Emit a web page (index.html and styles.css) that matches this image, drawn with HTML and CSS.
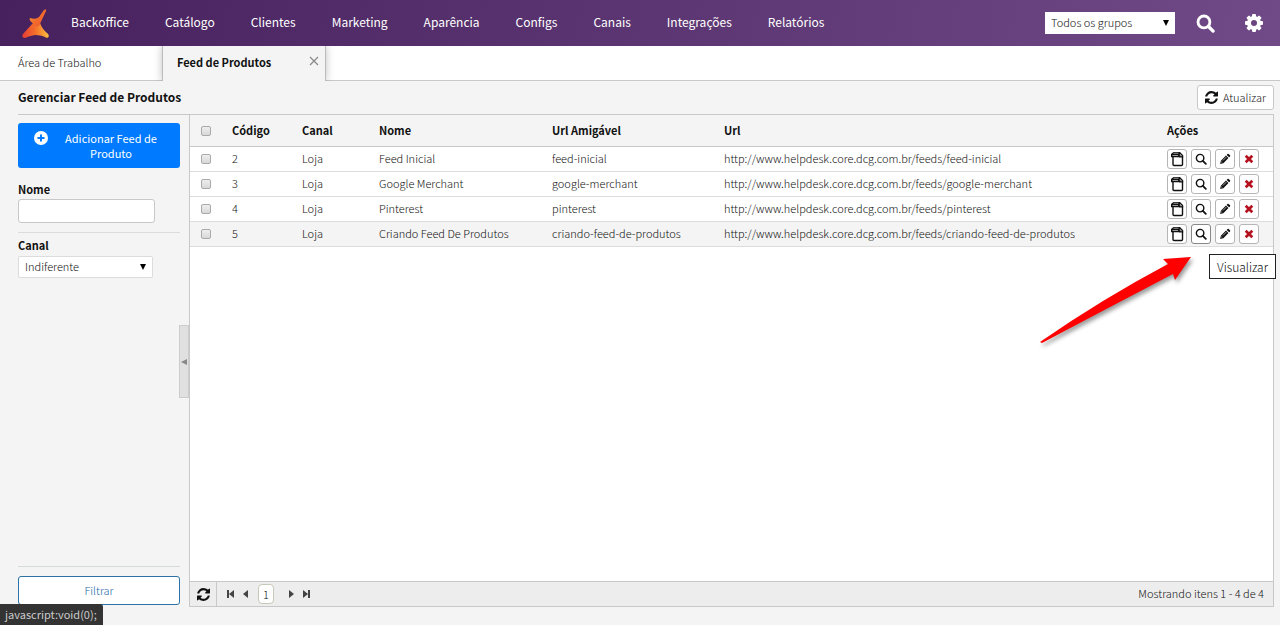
FILE: index.html
```html
<!DOCTYPE html>
<html lang="pt-BR">
<head>
  <meta charset="UTF-8" />
  <title>Feed de Produtos</title>
  <link rel="stylesheet" href="styles.css">
</head>
<body>
  <svg class="sprite" aria-hidden="true">
    <symbol id="icon-search" viewBox="0 0 16 16">
      <circle cx="6.7" cy="6.7" r="5" fill="none" stroke="currentColor" stroke-width="2.4" />
      <path d="M10.5 10.5L14.4 14.4" stroke="currentColor" stroke-width="2.8" stroke-linecap="round" />
    </symbol>
    <symbol id="icon-zoom" viewBox="0 0 16 16">
      <circle cx="6.8" cy="6.8" r="5" fill="none" stroke="currentColor" stroke-width="1.9" />
      <path d="M10.5 10.5L14.4 14.4" stroke="currentColor" stroke-width="2.4" stroke-linecap="round" />
    </symbol>
    <symbol id="icon-refresh" viewBox="0 0 1536 1536">
      <path fill="currentColor" d="M1511 928q0 5-1 7-64 268-268 434.500T764 1536q-146 0-282.500-55T238 1324l-129 129q-19 19-45 19t-45-19-19-45V960q0-26 19-45t45-19h448q26 0 45 19t19 45-19 45l-137 137q71 66 161 102t187 36q134 0 250-65t186-179q11-17 53-117 8-23 30-23h192q13 0 22.500 9.500t9.500 22.500zm25-800v448q0 26-19 45t-45 19h-448q-26 0-45-19t-19-45 19-45l138-138Q969 256 768 256q-134 0-250 65T332 500q-11 17-53 117-8 23-30 23H50q-13 0-22.500-9.500T18 608v-7q65-268 270-434.500T768 0q146 0 284 55.500T1297 212l130-129q19-19 45-19t45 19 19 45z" />
    </symbol>
    <symbol id="icon-copy" viewBox="0 0 14 16">
      <path d="M3 6V13.500Q3 14.500 4 14.500H11.500Q12.500 14.500 12.500 13.500V5.500" fill="none" stroke="currentColor" stroke-width="1.400" />
      <path d="M3.500 1H10L13.200 4.200V6.500H9V6.200H1V3z" fill="currentColor" />
      <path d="M3.500 2.200H8.500M2.500 4.500H8M10.300 3V4.700H12" fill="none" stroke="#fff" stroke-width=".6" />
    </symbol>
    <symbol id="icon-pencil" viewBox="0 0 16 16">
      <path fill="currentColor" d="M1.500 14.500L2.500 10.200 9.300 3.400 12.600 6.700 5.800 13.500zM10.200 2.500L11.400 1.300q.7-.7 1.500 0L14.700 3.100q.7.800 0 1.500L13.500 5.800z" />
      <path d="M2.900 11.500L4.500 13.100M5.200 10L10 5.200" stroke="#fff" stroke-width=".8" />
    </symbol>
    <symbol id="icon-remove" viewBox="0 0 10 10">
      <path d="M1.700 1.700L8.300 8.300M8.300 1.700L1.700 8.300" stroke="currentColor" stroke-width="2.700" />
    </symbol>
  </svg>

  <header class="topbar">
    <a class="logo" href="#" aria-label="Início">
      <svg width="28" height="31" viewBox="0 0 28 31">
        <defs>
          <linearGradient id="logo-top" x1="0" y1="0" x2="1" y2="1">
            <stop offset="0" stop-color="#f9a534" />
            <stop offset=".5" stop-color="#f26a2c" />
            <stop offset="1" stop-color="#e8443a" />
          </linearGradient>
          <linearGradient id="logo-bottom" x1="0" y1="0" x2="1" y2="0">
            <stop offset="0" stop-color="#e63b35" />
            <stop offset=".5" stop-color="#f4702a" />
            <stop offset="1" stop-color="#fbc03f" />
          </linearGradient>
        </defs>
        <path fill="url(#logo-bottom)" d="M11 15L18 15Q20 21 26 26Q28 29 25 30Q20 27 13 27Q7 28 3 30Q-1 30 1 26Z" />
        <path fill="url(#logo-top)" d="M22 2Q25 0 24 3L17 18Q10 18 3 27Q10 19 12 16Q6 12 8 10Q14 12 17 9Z" />
      </svg>
    </a>
    <nav class="menu">
      <a href="#">Backoffice</a>
      <a href="#">Catálogo</a>
      <a href="#">Clientes</a>
      <a href="#">Marketing</a>
      <a href="#">Aparência</a>
      <a href="#">Configs</a>
      <a href="#">Canais</a>
      <a href="#">Integrações</a>
      <a href="#">Relatórios</a>
    </nav>
    <div class="tools">
      <div class="select select-group">
        <select aria-label="Grupo"><option>Todos os grupos</option></select>
      </div>
      <button class="tool" aria-label="Buscar"><svg width="19" height="19"><use href="#icon-search" /></svg></button>
      <button class="tool" aria-label="Configurações">
        <svg width="18" height="18" viewBox="0 0 18 18">
          <g fill="#fff">
            <rect x="7" y="0" width="4" height="18" rx="1" />
            <rect x="7" y="0" width="4" height="18" rx="1" transform="rotate(45 9 9)" />
            <rect x="7" y="0" width="4" height="18" rx="1" transform="rotate(90 9 9)" />
            <rect x="7" y="0" width="4" height="18" rx="1" transform="rotate(135 9 9)" />
            <circle cx="9" cy="9" r="7" />
          </g>
          <circle cx="9" cy="9" r="3" fill="#6b457f" />
        </svg>
      </button>
    </div>
  </header>

  <div class="tabs">
    <a class="tab" href="#">Área de Trabalho</a>
    <div class="tab tab-active">
      <a href="#">Feed de Produtos</a>
      <button class="tab-close" aria-label="Fechar">
        <svg width="10" height="10" viewBox="0 0 10 10"><path d="M1 1L9 9M9 1L1 9" stroke="#888" stroke-width="1.2" /></svg>
      </button>
    </div>
  </div>

  <main class="page">
    <div class="page-head">
      <h1>Gerenciar Feed de Produtos</h1>
      <button class="btn-refresh"><svg width="13" height="13"><use href="#icon-refresh" /></svg>Atualizar</button>
    </div>

    <div class="content">
      <aside class="sidebar">
        <button class="btn-add">
          <svg width="14" height="14" viewBox="0 0 14 14">
            <circle cx="7" cy="7" r="7" fill="#fff" />
            <path d="M7 3.500V10.500M3.500 7H10.500" stroke="#007bff" stroke-width="2" />
          </svg>
          <span>Adicionar Feed de Produto</span>
        </button>
        <div class="field">
          <label for="nome">Nome</label>
          <input type="text" id="nome">
        </div>
        <div class="field">
          <label for="canal">Canal</label>
          <div class="select select-canal">
            <select id="canal"><option>Indiferente</option></select>
          </div>
        </div>
        <div class="filter">
          <button class="btn-filter">Filtrar</button>
        </div>
        <button class="collapse" aria-label="Recolher"></button>
      </aside>

      <section class="grid">
        <table>
          <colgroup>
            <col class="col-check"><col class="col-code"><col class="col-canal"><col class="col-name"><col class="col-slug"><col><col class="col-actions">
          </colgroup>
          <thead>
            <tr>
              <th><input type="checkbox" aria-label="Selecionar todos"></th>
              <th>Código</th>
              <th>Canal</th>
              <th>Nome</th>
              <th>Url Amigável</th>
              <th>Url</th>
              <th>Ações</th>
            </tr>
          </thead>
          <tbody>
            <tr>
              <td><input type="checkbox" aria-label="Selecionar 2"></td>
              <td>2</td>
              <td>Loja</td>
              <td>Feed Inicial</td>
              <td>feed-inicial</td>
              <td>http://www.helpdesk.core.dcg.com.br/feeds/feed-inicial</td>
              <td>
                <div class="actions">
                  <button aria-label="Copiar"><svg width="14" height="16"><use href="#icon-copy" /></svg></button>
                  <button aria-label="Visualizar"><svg width="12" height="12"><use href="#icon-zoom" /></svg></button>
                  <button aria-label="Editar"><svg width="12" height="12"><use href="#icon-pencil" /></svg></button>
                  <button class="remove" aria-label="Excluir"><svg width="10" height="10"><use href="#icon-remove" /></svg></button>
                </div>
              </td>
            </tr>
            <tr>
              <td><input type="checkbox" aria-label="Selecionar 3"></td>
              <td>3</td>
              <td>Loja</td>
              <td>Google Merchant</td>
              <td>google-merchant</td>
              <td>http://www.helpdesk.core.dcg.com.br/feeds/google-merchant</td>
              <td>
                <div class="actions">
                  <button aria-label="Copiar"><svg width="14" height="16"><use href="#icon-copy" /></svg></button>
                  <button aria-label="Visualizar"><svg width="12" height="12"><use href="#icon-zoom" /></svg></button>
                  <button aria-label="Editar"><svg width="12" height="12"><use href="#icon-pencil" /></svg></button>
                  <button class="remove" aria-label="Excluir"><svg width="10" height="10"><use href="#icon-remove" /></svg></button>
                </div>
              </td>
            </tr>
            <tr>
              <td><input type="checkbox" aria-label="Selecionar 4"></td>
              <td>4</td>
              <td>Loja</td>
              <td>Pinterest</td>
              <td>pinterest</td>
              <td>http://www.helpdesk.core.dcg.com.br/feeds/pinterest</td>
              <td>
                <div class="actions">
                  <button aria-label="Copiar"><svg width="14" height="16"><use href="#icon-copy" /></svg></button>
                  <button aria-label="Visualizar"><svg width="12" height="12"><use href="#icon-zoom" /></svg></button>
                  <button aria-label="Editar"><svg width="12" height="12"><use href="#icon-pencil" /></svg></button>
                  <button class="remove" aria-label="Excluir"><svg width="10" height="10"><use href="#icon-remove" /></svg></button>
                </div>
              </td>
            </tr>
            <tr class="row-hover">
              <td><input type="checkbox" aria-label="Selecionar 5"></td>
              <td>5</td>
              <td>Loja</td>
              <td>Criando Feed De Produtos</td>
              <td>criando-feed-de-produtos</td>
              <td>http://www.helpdesk.core.dcg.com.br/feeds/criando-feed-de-produtos</td>
              <td>
                <div class="actions">
                  <button aria-label="Copiar"><svg width="14" height="16"><use href="#icon-copy" /></svg></button>
                  <button class="focused" aria-label="Visualizar"><svg width="12" height="12"><use href="#icon-zoom" /></svg></button>
                  <button aria-label="Editar"><svg width="12" height="12"><use href="#icon-pencil" /></svg></button>
                  <button class="remove" aria-label="Excluir"><svg width="10" height="10"><use href="#icon-remove" /></svg></button>
                </div>
              </td>
            </tr>
          </tbody>
        </table>

        <footer class="pager">
          <button class="pager-refresh" aria-label="Recarregar"><svg width="13" height="13"><use href="#icon-refresh" /></svg></button>
          <button aria-label="Primeira"><svg width="7" height="8" viewBox="0 0 7 8"><path d="M0 0H2V8H0zM7 0V8L2 4z" /></svg></button>
          <button aria-label="Anterior"><svg width="5" height="8" viewBox="0 0 5 8"><path d="M5 0V8L0 4z" /></svg></button>
          <input type="text" value="1" aria-label="Página">
          <button aria-label="Próxima"><svg width="5" height="8" viewBox="0 0 5 8"><path d="M0 0V8L5 4z" /></svg></button>
          <button aria-label="Última"><svg width="7" height="8" viewBox="0 0 7 8"><path d="M5 0H7V8H5zM0 0V8L5 4z" /></svg></button>
          <span class="pager-info">Mostrando itens 1 - 4 de 4</span>
        </footer>
      </section>
    </div>
  </main>

  <svg class="pointer" width="170" height="100" viewBox="0 0 170 100" aria-hidden="true">
    <path fill="#fe0000" d="M161 7L133 9L138 14Q72 49 10 92L12 93Q76 59 143 24L145 30Z" />
  </svg>
  <div class="tooltip">Visualizar</div>
  <div class="status">javascript:void(0);</div>
</body>
</html>
```
FILE: styles.css
```css
* {
  box-sizing: border-box;
}
body {
  display: flex;
  flex-direction: column;
  position: relative;
  min-height: 100vh;
  margin: 0;
  background-color: #f4f4f4;
  color: #111;
  font-family: "Noto Sans CJK SC", "Open Sans", sans-serif;
  font-size: 11px;
  font-weight: 300;
  line-height: 15px;
}
a {
  color: inherit;
  text-decoration: none;
}
button, input, select {
  margin: 0;
  padding: 0;
  color: inherit;
  font: inherit;
}
button {
  display: flex;
  align-items: center;
  justify-content: center;
  border: 0;
  background: none;
  cursor: pointer;
}
.sprite {
  display: none;
}

/* top bar */
.topbar {
  display: flex;
  align-items: center;
  height: 46px;
  padding: 0 17px 0 22px;
  background: linear-gradient(100deg, #47215d, #704a86);
  color: #fff;
}
.logo {
  display: flex;
  width: 49px;
}
.menu {
  display: flex;
  gap: 36px;
  padding-bottom: 3px;
  font-size: 12px;
  font-weight: 400;
}
.tools {
  display: flex;
  align-items: center;
  margin-left: auto;
}
.tool {
  margin-left: 21px;
}
.tool + .tool {
  margin-left: 30px;
}
.select {
  position: relative;
  background-color: #fff;
  color: #111;
}
.select select {
  display: block;
  width: 100%;
  height: 100%;
  padding: 0 6px 2px;
  border: 0;
  background: none;
  appearance: none;
}
.select::after {
  content: "";
  position: absolute;
  top: 50%;
  right: 6px;
  margin-top: -3px;
  border: solid transparent;
  border-width: 6px 3px 0;
  border-top-color: #000;
  pointer-events: none;
}
.select-group {
  width: 130px;
  height: 22px;
}

/* tabs */
.tabs {
  display: flex;
  height: 35px;
  border-bottom: 1px solid #c8c8c8;
  background-color: #fff;
}
.tab {
  display: flex;
  align-items: center;
  width: 162px;
  padding: 0 0 2px 18px;
}
.tab-active {
  justify-content: space-between;
  width: 164px;
  height: 35px;
  padding: 0 6px 2px 14px;
  border: solid #bbb;
  border-width: 0 1px;
  background-color: #f4f4f4;
  box-shadow: 0 0 8px rgba(0,0,0,0.25);
  clip-path: inset(0 -10px 0 -10px);
  font-weight: 700;
}
.tab-close {
  padding-bottom: 4px;
}

/* page */
.page {
  display: flex;
  flex: 1;
  flex-direction: column;
  padding: 0 6px 18px 18px;
}
.page-head {
  display: flex;
  align-items: center;
  justify-content: space-between;
  height: 34px;
  border-bottom: 1px solid #c8c8c8;
}
h1 {
  margin: 0;
  padding-bottom: 2px;
  font-size: 12px;
  font-weight: 700;
}
.btn-refresh {
  gap: 5px;
  height: 25px;
  padding: 0 7px;
  border: 1px solid #c8c8c8;
  border-radius: 3px;
  background-color: #fff;
}
.content {
  display: flex;
  flex: 1;
}

/* sidebar */
.sidebar {
  display: flex;
  flex-direction: column;
  position: relative;
  width: 171px;
  padding: 8px 9px 2px 0;
}
.btn-add {
  align-items: flex-start;
  gap: 10px;
  padding: 8px 16px 7px;
  border-radius: 3px;
  background-color: #007bff;
  color: #fff;
  font-weight: 400;
}
.btn-add svg {
  flex: none;
}
.btn-add span {
  flex: 1;
}
.field {
  padding: 14px 0 9px;
}
.field + .field {
  padding-top: 5px;
  border-top: 1px solid #dcdcdc;
}
.field label {
  display: block;
  margin-bottom: 2px;
  font-weight: 700;
}
.field input {
  display: block;
  width: 137px;
  height: 24px;
  padding: 0 6px;
  border: 1px solid #c8c8c8;
  border-radius: 3px;
}
.field .select {
  margin-top: 3px;
}
.select-canal {
  width: 135px;
  height: 22px;
  border: 1px solid #dcdcdc;
  border-radius: 2px;
}
.filter {
  margin-top: auto;
  padding-top: 9px;
  border-top: 1px solid #d5dcd5;
}
.btn-filter {
  width: 100%;
  height: 29px;
  border: 1px solid #2a72a8;
  border-radius: 3px;
  background-color: #fff;
  color: #2468a8;
}
.collapse {
  position: absolute;
  top: 210px;
  right: 0;
  width: 10px;
  height: 73px;
  border: 1px solid #ccc;
  background-color: #e0e0e0;
}
.collapse::before {
  content: "";
  border: solid transparent;
  border-width: 3px 6px 3px 0;
  border-right-color: #888;
}

/* grid */
.grid {
  display: flex;
  flex: 1;
  flex-direction: column;
  border: 1px solid #c8c8c8;
  border-top: 0;
  background-color: #fff;
}
table {
  width: 100%;
  border-spacing: 0;
  table-layout: fixed;
}
.col-check {
  width: 31px;
}
.col-code {
  width: 70px;
}
.col-canal {
  width: 77px;
}
.col-name {
  width: 173px;
}
.col-slug {
  width: 172px;
}
.col-actions {
  width: 117px;
}
th, td {
  height: 25px;
  padding: 0 0 0 11px;
  border-bottom: 1px solid #dcdcdc;
  text-align: left;
  white-space: nowrap;
}
td {
  padding-bottom: 1px;
}
td:last-child {
  padding-bottom: 0;
}
th {
  height: 32px;
  border-bottom-color: #c8c8c8;
  background-color: #f4f4f4;
  font-weight: 700;
}
.row-hover {
  background-color: #f4f4f4;
}
input[type="checkbox"] {
  display: block;
  width: 10px;
  height: 10px;
  border: 1px solid #aaa;
  border-radius: 2px;
  background: linear-gradient(#eee, #d8d8d8);
  appearance: none;
}
.actions {
  display: flex;
  gap: 4px;
}
.actions button {
  width: 20px;
  height: 20px;
  border: 1px solid #b5b5b5;
  border-radius: 3px;
  background-color: #fff;
}
.actions .focused {
  border-color: #888;
}
.actions .remove {
  color: #b5121f;
}

/* pager */
.pager {
  display: flex;
  align-items: center;
  height: 25px;
  margin-top: auto;
  padding-right: 9px;
  border-top: 1px solid #c8c8c8;
  background-color: #ededed;
}
.pager button {
  width: 15px;
  height: 24px;
  fill: #444;
}
.pager .pager-refresh {
  width: 27px;
  margin-right: 6px;
  border-right: 1px solid #c8c8c8;
}
.pager input {
  width: 16px;
  height: 20px;
  margin: 0 10px 0 5px;
  border: 1px solid #c8c8b8;
  border-radius: 4px;
  background-color: #fff;
  text-align: center;
}
.pager-info {
  margin-left: auto;
  padding-bottom: 1px;
}

/* overlays */
.pointer {
  position: absolute;
  top: 250px;
  right: 80px;
  filter: drop-shadow(2px 3px 2px rgba(0,0,0,0.4));
  pointer-events: none;
}
.tooltip {
  position: absolute;
  top: 254px;
  right: 4px;
  padding: 4px 7px;
  border: 1px solid #222;
  background-color: #fff;
  font-size: 12px;
}
.status {
  position: fixed;
  bottom: 0;
  left: 0;
  padding: 3px 6px 3px 5px;
  border-top-right-radius: 3px;
  background-color: #333;
  color: #ccc;
  font-weight: 400;
}
```
